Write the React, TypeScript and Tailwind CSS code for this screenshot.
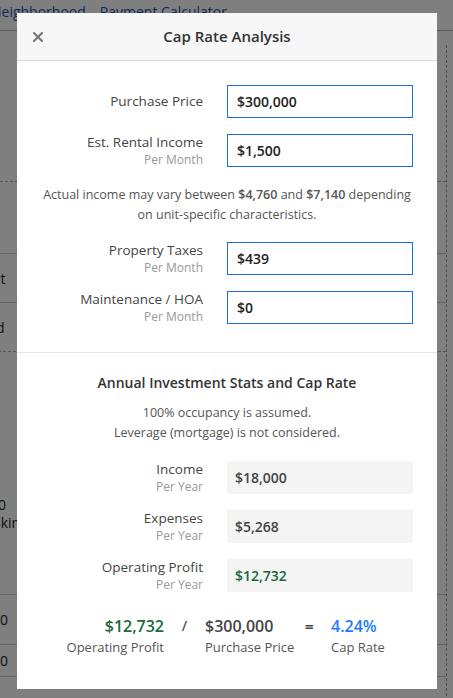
import { X } from "lucide-react";

type FieldProps = {
  label: string;
  sub?: string;
  value: string;
};

const font = { fontFamily: '"Open Sans", "Noto Sans", sans-serif' };

const InputRow: React.FC<FieldProps> = ({ label, sub, value }) => {
  return (
    <div className="grid grid-cols-[1fr_186px] gap-x-6 items-start">
      <div className={`h-[33px] text-right ${sub ? "pt-0" : "pt-[8px]"}`}>
        <div className="text-[13.5px] leading-[17px] text-[#444]">{label}</div>
        {sub && <div className="text-[12px] leading-[18px] text-[#999]">{sub}</div>}
      </div>
      <div className="h-[33px] border border-[#1a6fe8] bg-white flex items-center px-[9px] text-[14px] font-semibold text-[#222]">
        {value}
      </div>
    </div>
  );
};

const StatRow: React.FC<FieldProps & { green?: boolean }> = ({ label, sub, value, green }) => {
  return (
    <div className="grid grid-cols-[1fr_186px] gap-x-6 items-start">
      <div className="h-[33px] text-right">
        <div className="text-[13.5px] leading-[17px] text-[#444]">{label}</div>
        <div className="text-[12px] leading-[18px] text-[#999]">{sub}</div>
      </div>
      <div
        className={`h-[33px] bg-[#f4f4f4] flex items-center px-[8px] text-[14px] font-semibold ${
          green ? "text-[#17693a]" : "text-[#444]"
        }`}
      >
        {value}
      </div>
    </div>
  );
};

export default function App() {
  return (
    <div className="relative w-[453px] h-[698px] overflow-hidden bg-white" style={font}>
      {/* page behind the dialog */}
      <div className="h-[31px] border-b border-[#bbb] flex gap-[14px] items-start -ml-[9px] pt-[1px] text-[14px] text-[#2453a8]">
        <span>Neighborhood</span>
        <span>Payment Calculator</span>
      </div>
      <div className="flex">
        <div className="flex-1 flex flex-col text-[14px] text-[#222]">
          <div className="h-[150px]" />
          <div className="border-t border-dashed border-[#aaa] h-[72px]" />
          <div className="border-t border-[#ccc] h-[49px] flex items-center -ml-[8px]">nt</div>
          <div className="border-t border-[#ccc] h-[49px] flex items-center -ml-[4px]">d</div>
          <div className="border-t border-dashed border-[#aaa] h-[243px] flex flex-col justify-end pb-[62px] -ml-[2px]">
            <span className="leading-[18px]">0</span>
            <span className="leading-[18px] -ml-[4px]">skin</span>
          </div>
          <div className="border-t border-[#ccc] h-[50px] flex items-center">0</div>
          <div className="border-t border-[#ccc] h-[32px] flex items-center">0</div>
          <div className="border-t border-[#ccc] h-[20px]" />
        </div>
        <div className="w-[7px] mt-[14px] border-l border-dashed border-[#999]" />
      </div>

      {/* overlay */}
      <div className="absolute inset-0 bg-black/50" />

      {/* dialog */}
      <div className="absolute left-[17px] top-[13px] w-[420px] h-[676px] bg-white flex flex-col">
        <div className="h-[48px] bg-[#f7f7f7] border-b border-[#ddd] flex items-center relative">
          <X className="absolute left-[13px] top-[16px] text-[#777]" size={16} strokeWidth={3.2} />
          <div className="w-full text-center text-[15px] font-semibold text-[#333]">Cap Rate Analysis</div>
        </div>

        <div className="px-6 pt-6 flex flex-col gap-4">
          <InputRow label="Purchase Price" value="$300,000" />
          <InputRow label="Est. Rental Income" sub="Per Month" value="$1,500" />
        </div>

        <p className="mt-[18px] mb-[17px] text-center text-[12.5px] leading-[20px] text-[#555] px-3">
          Actual income may vary between <span className="font-semibold">$4,760</span> and{" "}
          <span className="font-semibold">$7,140</span> depending
          <br />
          on unit-specific characteristics.
        </p>

        <div className="px-6 flex flex-col gap-4">
          <InputRow label="Property Taxes" sub="Per Month" value="$439" />
          <InputRow label="Maintenance / HOA" sub="Per Month" value="$0" />
        </div>

        <div className="mt-[28px] border-t border-[#e4e4e4]" />

        <div className="pt-[20px] text-center">
          <div className="text-[14px] font-semibold text-[#333] leading-[20px]">
            Annual Investment Stats and Cap Rate
          </div>
          <div className="mt-[10px] text-[12.5px] leading-[20px] text-[#555]">
            <div>100% occupancy is assumed.</div>
            <div>Leverage (mortgage) is not considered.</div>
          </div>
        </div>

        <div className="px-6 pt-[18px] flex flex-col gap-4">
          <StatRow label="Income" sub="Per Year" value="$18,000" />
          <StatRow label="Expenses" sub="Per Year" value="$5,268" />
          <StatRow label="Operating Profit" sub="Per Year" value="$12,732" green />
        </div>

        <div className="mt-[23px] flex items-start">
          <div className="w-[147px] text-right">
            <div className="text-[16px] font-semibold text-[#17693a] leading-[22px]">$12,732</div>
            <div className="text-[13px] text-[#555] leading-[20px]">Operating Profit</div>
          </div>
          <div className="w-[41px] text-center text-[14px] font-semibold text-[#555] leading-[22px]">/</div>
          <div className="w-[100px]">
            <div className="text-[16px] font-semibold text-[#444] leading-[22px]">$300,000</div>
            <div className="text-[13px] text-[#555] leading-[20px]">Purchase Price</div>
          </div>
          <div className="w-[25px] text-[15px] font-bold text-[#444] leading-[22px]">=</div>
          <div className="pl-[1px]">
            <div className="text-[16px] font-semibold text-[#1a7bff] leading-[22px]">4.24%</div>
            <div className="text-[13px] text-[#555] leading-[20px]">Cap Rate</div>
          </div>
        </div>
      </div>
    </div>
  );
}
